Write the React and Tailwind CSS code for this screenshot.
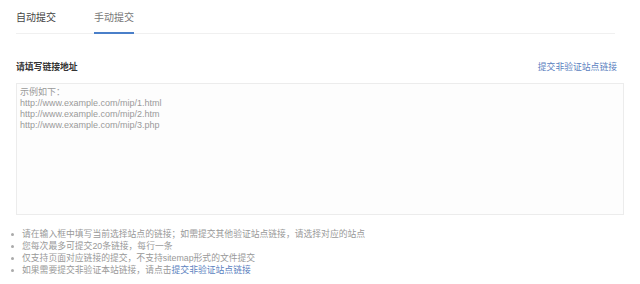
export default function App() {
  const tips = [
    "请在输入框中填写当前选择站点的链接；如需提交其他验证站点链接，请选择对应的站点",
    "您每次最多可提交20条链接，每行一条",
    "仅支持页面对应链接的提交，不支持sitemap形式的文件提交",
  ];

  return (
    <div className="w-[640px] h-[284px] bg-white overflow-hidden font-['Liberation_Sans','Noto_Sans_CJK_SC',sans-serif]">
      {/* tabs */}
      <div className="ml-4 mr-[25px] flex border-b border-[#f0f0f0]">
        <div className="pt-[12px] pb-[8px] leading-[12px] text-[10px] text-[#444] border-b-2 border-transparent -mb-px">
          自动提交
        </div>
        <div className="ml-[38px] pt-[12px] pb-[8px] leading-[12px] text-[10px] text-[#777] border-b-2 border-[#4a7fc9] -mb-px">
          手动提交
        </div>
      </div>

      {/* label row */}
      <div className="mt-[27px] ml-4 mr-[23px] flex items-center justify-between leading-[12px]">
        <span className="text-[8.8px] font-bold text-[#333]">请填写链接地址</span>
        <a href="#" className="text-[8.8px] text-[#5b7fc0]">提交非验证站点链接</a>
      </div>

      {/* textarea */}
      <div className="mt-[10px] ml-4 mr-4 h-[132px] border border-[#ececec] bg-[#fdfdfd] pt-[3px] pl-[3px] text-[9px] leading-[11px] text-[#9a9a9a]">
        <div>示例如下：</div>
        <div>http://www.example.com/mip/1.html</div>
        <div>http://www.example.com/mip/2.htm</div>
        <div>http://www.example.com/mip/3.php</div>
      </div>

      {/* tips */}
      <ul className="mt-[13px] ml-[11px] text-[8.8px] leading-[12px] text-[#999]">
        {tips.map((t) => (
          <li key={t} className="flex items-center">
            <span className="w-[3px] h-[3px] rounded-full bg-[#aaa] mr-[8px]" />
            <span>{t}</span>
          </li>
        ))}
        <li className="flex items-center">
          <span className="w-[3px] h-[3px] rounded-full bg-[#aaa] mr-[8px]" />
          <span>
            如果需要提交非验证本站链接，请点击
            <a href="#" className="text-[#5b7fc0]">提交非验证站点链接</a>
          </span>
        </li>
      </ul>
    </div>
  );
}
